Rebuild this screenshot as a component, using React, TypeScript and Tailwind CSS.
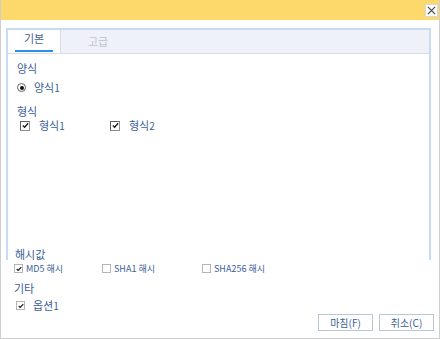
import React from "react";

const font = { fontFamily: '"Noto Sans CJK KR", "Noto Sans", sans-serif' };

function Check({ checked, small }: { checked?: boolean; small?: boolean }) {
  const size = small ? "w-[9px] h-[9px] border-[#b4b4b4]" : "w-[10px] h-[10px] border-[#909090] border-t-[#606060] border-l-[#606060]";
  return (
    <span className={`${size} inline-flex items-center justify-center bg-white border shrink-0`}>
      {checked && (
        <svg viewBox="0 0 8 8" className={small ? "w-[6px] h-[6px]" : "w-[7px] h-[7px]"}>
          <path d="M1 4 L3 6 L7 1.5" fill="none" stroke="#1a1a1a" strokeWidth="1.6" />
        </svg>
      )}
    </span>
  );
}

function Radio() {
  return (
    <span className="w-[9px] h-[9px] rounded-full border border-[#606060] bg-white inline-flex items-center justify-center">
      <span className="w-[4px] h-[4px] rounded-full bg-[#111]" />
    </span>
  );
}

export default function App() {
  return (
    <div
      className="w-[440px] h-[339px] bg-white border-x border-b border-[#cfcfcf] flex flex-col text-[#3a5e96]"
      style={font}
    >
      {/* title bar */}
      <div className="h-[20px] bg-[#fdd86b] flex justify-end items-start pt-[4px] pr-[1px]">
        <button className="w-[13px] h-[13px] bg-white border border-[#d8d8d8] flex items-center justify-center">
          <svg viewBox="0 0 10 10" className="w-[9px] h-[9px]">
            <path d="M1 1 L9 9 M9 1 L1 9" stroke="#444" strokeWidth="1.3" />
          </svg>
        </button>
      </div>

      <div className="pl-[5px] pt-[8px] flex-1 flex flex-col">
        {/* panel */}
        <div className="w-[425px] h-[232px] border-x-2 border-t-2 border-[#c8dbf2] flex flex-col">
          <div className="h-[24px] bg-[#eef2f8] border-b border-[#d6dde6] flex text-[11px]">
            <div className="w-[53px] bg-white border-r border-[#d6dde6] flex flex-col items-center justify-end">
              <span className="text-[#3d5f93] leading-none mb-[6px]">기본</span>
              <span className="w-[38px] h-[2px] bg-[#2d8fe6] mb-[1px]" />
            </div>
            <div className="w-[74px] flex items-center justify-center text-[#c0c4ca]">고급</div>
          </div>

          <div className="flex flex-col pl-[9px] pt-[9px] text-[11px] leading-none flex-1">
            <span>양식</span>
            <div className="flex items-center gap-[8px] mt-[8px]">
              <Radio />
              <span>
                양식<span className="text-[10px]">1</span>
              </span>
            </div>
            <span className="mt-[13px]">형식</span>
            <div className="flex items-center mt-[3px] pl-[3px]">
              <div className="flex items-center gap-[9px] w-[90px]">
                <Check checked />
                <span>
                  형식<span className="text-[10px]">1</span>
                </span>
              </div>
              <div className="flex items-center gap-[9px]">
                <Check checked />
                <span>
                  형식<span className="text-[10px]">2</span>
                </span>
              </div>
            </div>
            <span className="mt-auto -ml-[2px]">해시값</span>
          </div>
        </div>

        <div className="flex items-center pl-[8px] mt-[4px] text-[9px] leading-none">
          <div className="flex items-center gap-[3px] w-[88px]">
            <Check checked small />
            <span>MD5 해시</span>
          </div>
          <div className="flex items-center gap-[3px] w-[100px]">
            <Check small />
            <span>SHA1 해시</span>
          </div>
          <div className="flex items-center gap-[3px]">
            <Check small />
            <span>SHA256 해시</span>
          </div>
        </div>

        <span className="text-[11px] leading-none mt-[10px] pl-[8px]">기타</span>
        <div className="flex items-center gap-[8px] pl-[10px] mt-[6px] text-[11px] leading-none">
          <Check checked small />
          <span>
            옵션<span className="text-[10px]">1</span>
          </span>
        </div>

        <div className="flex justify-end gap-[6px] pr-[5px] mt-[3px]">
          <button className="w-[55px] h-[17px] border border-[#b9c6d6] bg-white text-[10px] text-[#3a5e96] leading-none">
            마침(F)
          </button>
          <button className="w-[55px] h-[17px] border border-[#b9c6d6] bg-white text-[10px] text-[#3a5e96] leading-none">
            취소(C)
          </button>
        </div>
      </div>
    </div>
  );
}
